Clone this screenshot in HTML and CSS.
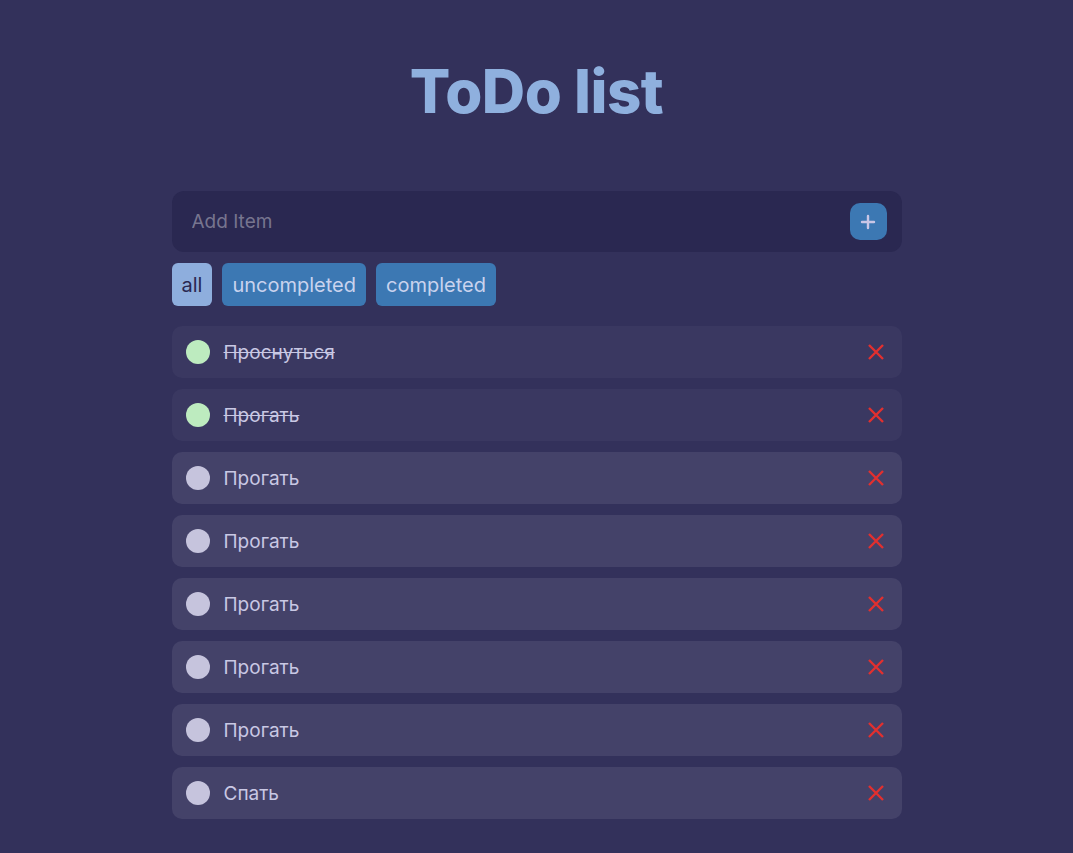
FILE: index.html
```html
<!DOCTYPE html>
<html lang="ru">
<head>
<meta charset="utf-8">
<title>ToDo list</title>
<link rel="stylesheet" href="styles.css">
</head>
<body>
<main class="app">
  <h1 class="title">ToDo list</h1>
  <form class="add-form">
    <input class="add-input" type="text" placeholder="Add Item">
    <button class="add-btn" type="button" aria-label="Add">
      <svg width="16" height="16" viewBox="0 0 16 16"><path d="M8 2v12M2 8h12" stroke="#c9c6e6" stroke-width="2.4" stroke-linecap="round"/></svg>
    </button>
  </form>
  <div class="filters">
    <button class="filter active" type="button">all</button>
    <button class="filter" type="button">uncompleted</button>
    <button class="filter" type="button">completed</button>
  </div>
  <ul class="list">
    <li class="item done"><span class="dot"></span><span class="text">Проснуться</span><svg class="del" viewBox="0 0 18 18"><path d="M2 2l14 14M16 2L2 16"/></svg></li>
    <li class="item done"><span class="dot"></span><span class="text">Прогать</span><svg class="del" viewBox="0 0 18 18"><path d="M2 2l14 14M16 2L2 16"/></svg></li>
    <li class="item"><span class="dot"></span><span class="text">Прогать</span><svg class="del" viewBox="0 0 18 18"><path d="M2 2l14 14M16 2L2 16"/></svg></li>
    <li class="item"><span class="dot"></span><span class="text">Прогать</span><svg class="del" viewBox="0 0 18 18"><path d="M2 2l14 14M16 2L2 16"/></svg></li>
    <li class="item"><span class="dot"></span><span class="text">Прогать</span><svg class="del" viewBox="0 0 18 18"><path d="M2 2l14 14M16 2L2 16"/></svg></li>
    <li class="item"><span class="dot"></span><span class="text">Прогать</span><svg class="del" viewBox="0 0 18 18"><path d="M2 2l14 14M16 2L2 16"/></svg></li>
    <li class="item"><span class="dot"></span><span class="text">Прогать</span><svg class="del" viewBox="0 0 18 18"><path d="M2 2l14 14M16 2L2 16"/></svg></li>
    <li class="item"><span class="dot"></span><span class="text">Спать</span><svg class="del" viewBox="0 0 18 18"><path d="M2 2l14 14M16 2L2 16"/></svg></li>
  </ul>
</main>
</body>
</html>
```

FILE: styles.css
```css
* { box-sizing: border-box; }
html, body { margin: 0; padding: 0; }
body {
  background: #33315b;
  font-family: Inter, "Noto Sans", sans-serif;
  color: #c9c8e4;
  min-height: 853px;
}
.app {
  width: 730px;
  margin: 0 auto;
  padding-top: 60px;
}
.title {
  margin: 0 0 69px;
  text-align: center;
  font-size: 60px;
  line-height: 62px;
  font-weight: 800;
  color: #8fb0de;
  letter-spacing: -0.5px;
}
.add-form {
  display: flex;
  align-items: center;
  height: 61px;
  background: #2a2851;
  border-radius: 12px;
  padding: 0 15px 0 20px;
}
.add-input {
  flex: 1;
  background: transparent;
  border: 0;
  outline: 0;
  font-family: inherit;
  font-size: 19px;
  color: #c9c8e4;
  padding: 0;
}
.add-input::placeholder { color: #77758f; }
.add-btn {
  width: 37px;
  height: 37px;
  border: 0;
  border-radius: 10px;
  background: #3c78b3;
  display: flex;
  align-items: center;
  justify-content: center;
  padding: 0;
}
.filters {
  display: flex;
  gap: 10px;
  margin-top: 11px;
}
.filter {
  height: 43px;
  padding: 0 10px;
  border: 0;
  border-radius: 6px;
  background: #3c78b3;
  color: #c9d3ee;
  font-family: inherit;
  font-size: 20px;
}
.filter.active {
  background: #8eaedd;
  color: #2a2851;
}
.list {
  list-style: none;
  margin: 20px 0 0;
  padding: 0;
  display: flex;
  flex-direction: column;
  gap: 11px;
}
.item {
  display: flex;
  align-items: center;
  height: 52px;
  padding: 0 17px 0 14px;
  background: #444269;
  border-radius: 10px;
  font-size: 19px;
}
.item.done { background: #3a3861; }
.dot {
  width: 24px;
  height: 24px;
  border-radius: 50%;
  background: #c6c4dd;
  margin-right: 14px;
  flex: none;
}
.done .dot { background: #bdebbf; }
.text { flex: 1; }
.done .text { text-decoration: line-through; }
.del {
  width: 18px;
  height: 18px;
  flex: none;
  stroke: #e2302f;
  stroke-width: 2.4;
  fill: none;
}
```
